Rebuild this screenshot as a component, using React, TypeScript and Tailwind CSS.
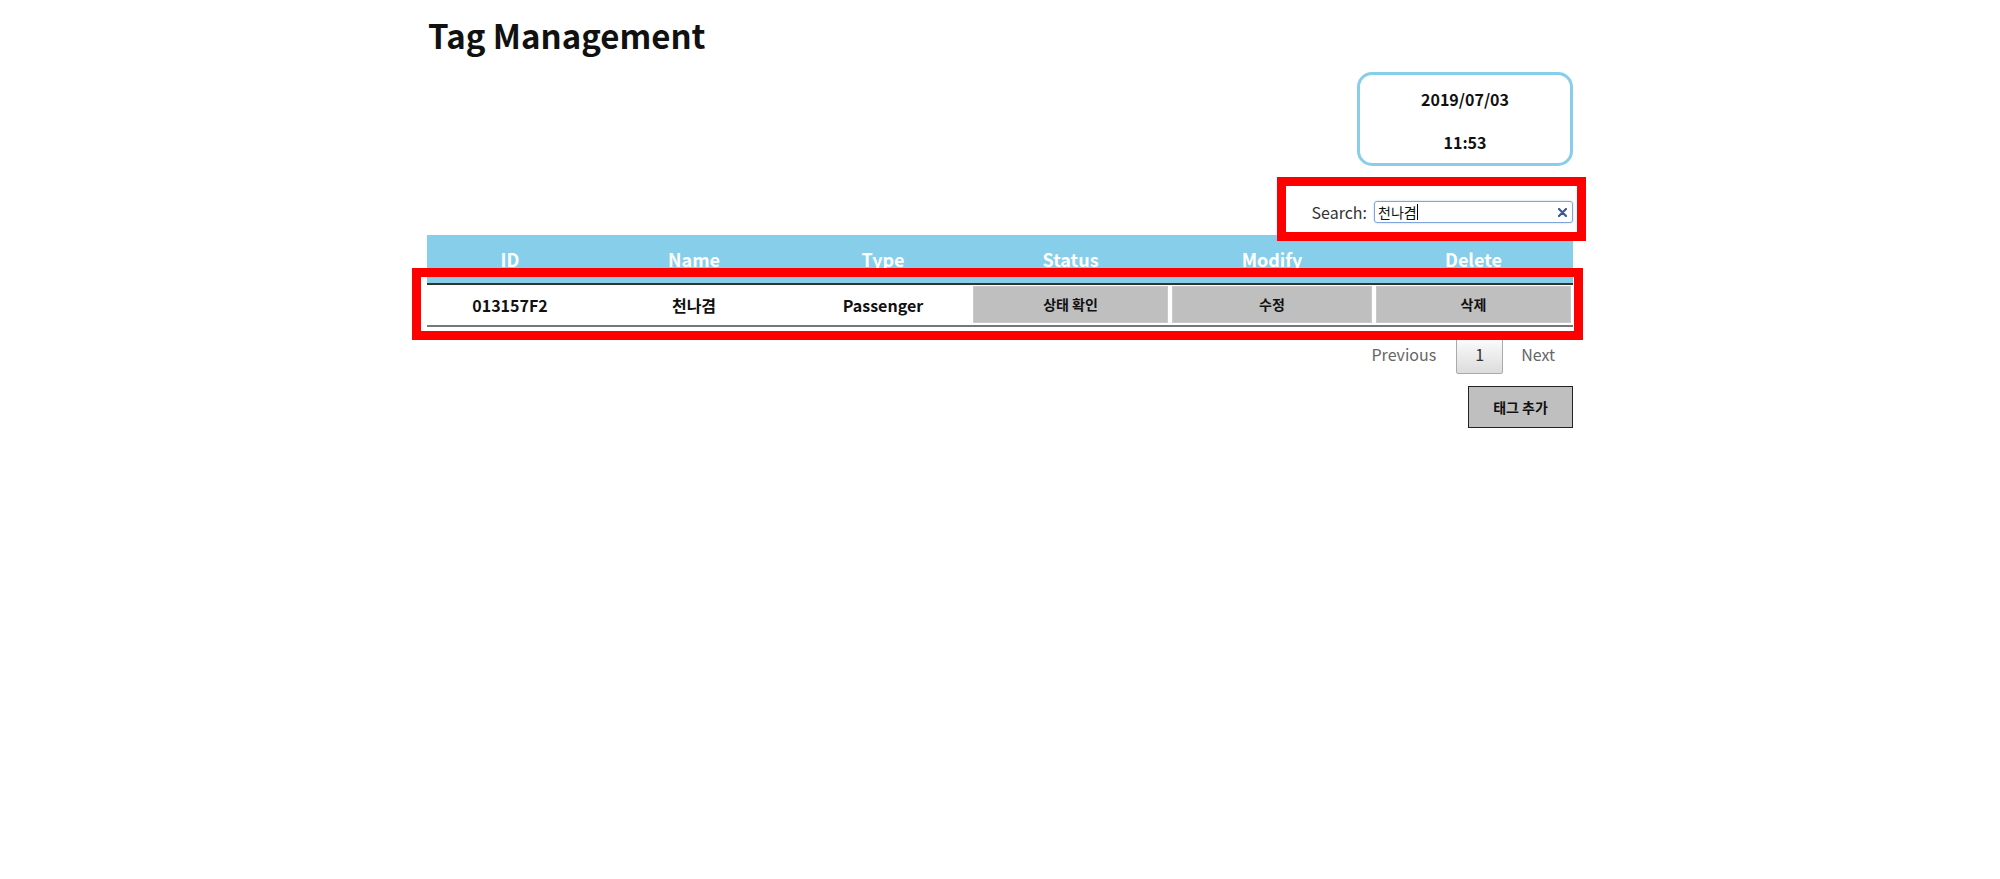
import React from "react";

const font = { fontFamily: '"Noto Sans CJK KR", "Noto Sans", sans-serif' };

const columns = ["ID", "Name", "Type", "Status", "Modify", "Delete"];

function ActionButton({ label }: { label: string }) {
  return (
    <div className="px-[2px] py-[1px]">
      <button className="w-full h-[37px] bg-[#bfbfbf] border border-[#c9c9c9] text-[14px] font-bold text-[#111]">
        {label}
      </button>
    </div>
  );
}

export default function App() {
  return (
    <div className="min-h-screen bg-white text-black" style={font}>
      <div className="relative w-[1146px] mx-auto flex flex-col">
        <h1 className="mt-[15px] ml-[1px] text-[33px] leading-[40px] font-bold text-[#111]">
          Tag Management
        </h1>

        <div className="self-end mt-[17px] w-[216px] h-[94px] rounded-[15px] border-[3px] border-[#87ceeb] flex flex-col items-center pt-[14px] gap-[23px] text-[16px] leading-[20px] font-bold text-[#111]">
          <span>2019/07/03</span>
          <span>11:53</span>
        </div>

        <div className="self-end mt-[34px] flex items-center h-[24px]">
          <label className="text-[16px] text-[#333] mr-[7px]">Search:</label>
          <div className="relative w-[199px] h-[22px] border border-[#7ea4da] rounded-[3px] shadow-[0_0_2px_#a9c6ee] flex items-center pl-[3px]">
            <span className="text-[14px] leading-[20px] text-[#111]">천나겸</span>
            <span className="w-px h-[16px] bg-black" />
            <svg
              className="absolute right-[5px] top-[6px]"
              width="9"
              height="9"
              viewBox="0 0 9 9"
            >
              <path
                d="M1 1 L8 8 M8 1 L1 8"
                stroke="#3d5a8a"
                strokeWidth="2.2"
                strokeLinecap="round"
              />
            </svg>
          </div>
        </div>

        <div className="mt-[11px] grid grid-cols-[166px_202px_176px_199px_204px_199px]">
          {columns.map((c) => (
            <div
              key={c}
              className="h-[50px] bg-[#87ceeb] border-b-2 border-[#333] flex items-center justify-center text-[18px] font-bold text-white"
            >
              {c}
            </div>
          ))}
          <div className="h-[42px] border-b-2 border-[#777] flex items-center justify-center text-[16px] font-bold text-[#111]">
            013157F2
          </div>
          <div className="h-[42px] border-b-2 border-[#777] flex items-center justify-center text-[16px] font-bold text-[#111]">
            천나겸
          </div>
          <div className="h-[42px] border-b-2 border-[#777] flex items-center justify-center text-[16px] font-bold text-[#111]">
            Passenger
          </div>
          <div className="h-[42px] border-b-2 border-[#777]">
            <ActionButton label="상태 확인" />
          </div>
          <div className="h-[42px] border-b-2 border-[#777]">
            <ActionButton label="수정" />
          </div>
          <div className="h-[42px] border-b-2 border-[#777]">
            <ActionButton label="삭제" />
          </div>
        </div>

        <div className="self-end mt-[7px] flex items-center text-[16px] leading-[22px] text-[#666]">
          <span className="pl-[16px] pr-[20px] py-[9px]">Previous</span>
          <span className="px-[18px] py-[8px] border border-[#aaa] rounded-[2px] bg-gradient-to-b from-white to-[#dcdcdc] text-[#333]">
            1
          </span>
          <span className="px-[16px] py-[9px] ml-[2px] mr-[2px]">Next</span>
        </div>

        <button className="self-end mt-[12px] w-[105px] h-[42px] bg-[#bfbfbf] border border-[#222] text-[14px] font-bold text-[#111]">
          태그 추가
        </button>

        <div className="absolute left-[850px] top-[177px] w-[309px] h-[64px] border-[9px] border-[#ff0000] pointer-events-none" />
        <div className="absolute left-[-15px] top-[268px] w-[1171px] h-[72px] border-[9px] border-[#ff0000] pointer-events-none" />
      </div>
    </div>
  );
}
